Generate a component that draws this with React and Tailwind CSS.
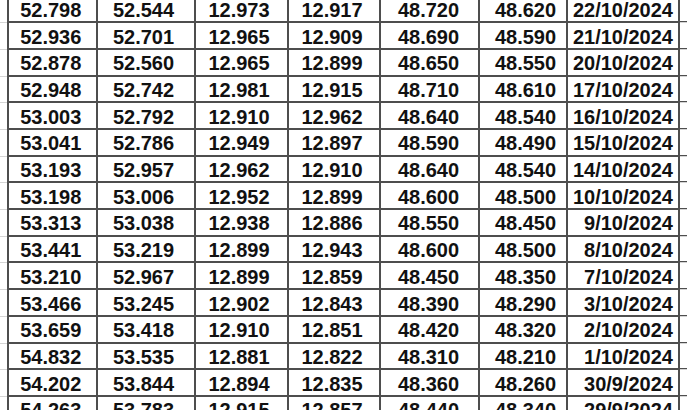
import React from "react";

const rows = [
  ["52.798", "52.544", "12.973", "12.917", "48.720", "48.620", "22/10/2024"],
  ["52.936", "52.701", "12.965", "12.909", "48.690", "48.590", "21/10/2024"],
  ["52.878", "52.560", "12.965", "12.899", "48.650", "48.550", "20/10/2024"],
  ["52.948", "52.742", "12.981", "12.915", "48.710", "48.610", "17/10/2024"],
  ["53.003", "52.792", "12.910", "12.962", "48.640", "48.540", "16/10/2024"],
  ["53.041", "52.786", "12.949", "12.897", "48.590", "48.490", "15/10/2024"],
  ["53.193", "52.957", "12.962", "12.910", "48.640", "48.540", "14/10/2024"],
  ["53.198", "53.006", "12.952", "12.899", "48.600", "48.500", "10/10/2024"],
  ["53.313", "53.038", "12.938", "12.886", "48.550", "48.450", "9/10/2024"],
  ["53.441", "53.219", "12.899", "12.943", "48.600", "48.500", "8/10/2024"],
  ["53.210", "52.967", "12.899", "12.859", "48.450", "48.350", "7/10/2024"],
  ["53.466", "53.245", "12.902", "12.843", "48.390", "48.290", "3/10/2024"],
  ["53.659", "53.418", "12.910", "12.851", "48.420", "48.320", "2/10/2024"],
  ["54.832", "53.535", "12.881", "12.822", "48.310", "48.210", "1/10/2024"],
  ["54.202", "53.844", "12.894", "12.835", "48.360", "48.260", "30/9/2024"],
  ["54.263", "53.783", "12.915", "12.857", "48.440", "48.340", "29/9/2024"],
];

const cellCls = [
  "w-[89.5px] justify-center pr-[3px]",
  "w-[98px] justify-center pr-[5px]",
  "w-[93px] justify-center pr-[5px]",
  "w-[92px] justify-center pr-[4px]",
  "w-[99px] justify-center pr-[2px]",
  "w-[88px] justify-center pl-[5px]",
  "w-[112px] justify-end pr-[5px]",
];

export default function App() {
  return (
    <div
      className="w-[687px] h-[410px] overflow-hidden bg-white text-[#111]"
      style={{ fontFamily: '"Liberation Sans", Arial, sans-serif' }}
    >
      <div className="flex flex-col mt-[-3.4px]">
        {rows.map((r, i) => (
          <div key={i} className="flex h-[26.7px] shrink-0">
            <div className="w-[6.5px] shrink-0 border-b border-[#d4d4d4]" />
            <div className="flex flex-1 border-l-2 border-b-2 border-[#4e4e4e]">
              {r.map((v, j) => (
                <div
                  key={j}
                  className={`${cellCls[j]} shrink-0 flex items-center pt-[2px] border-r-2 border-[#4e4e4e] text-[20px] font-bold leading-none`}
                >
                  {v}
                </div>
              ))}
              <div className="flex-1 border-b border-[#d4d4d4] mb-[-2px]" />
            </div>
          </div>
        ))}
      </div>
    </div>
  );
}
